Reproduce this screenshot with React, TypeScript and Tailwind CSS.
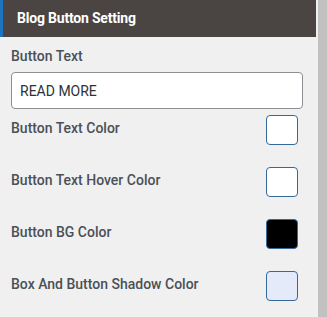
import { useState } from 'react';

const colorRows = [
  { label: 'Button Text Color', color: '#ffffff' },
  { label: 'Button Text Hover Color', color: '#ffffff' },
  { label: 'Button BG Color', color: '#000000' },
  { label: 'Box And Button Shadow Color', color: '#e5eafa' },
];

export default function App() {
  const [text, setText] = useState('READ MORE');

  return (
    <div className="flex h-[317px] w-[327px] overflow-hidden bg-[#f0f0f0] font-['Roboto',sans-serif]">
      <div className="flex w-[316px] flex-col">
        <div className="flex h-[37px] items-center border-l-[3px] border-[#1e73be] bg-[#4a4543] pl-[14px]">
          <span className="text-[14px] font-bold tracking-[-0.2px] text-white">Blog Button Setting</span>
        </div>

        <div className="flex flex-col px-[11px]">
          <label className="mt-[10px] text-[14px] font-medium leading-[18px] text-[#4a5057]">Button Text</label>
          <input
            type="text"
            value={text}
            onChange={(e) => setText(e.target.value)}
            className="mt-[7px] h-[37px] w-[292px] rounded-[4px] border border-[#8c8f94] bg-white px-[8px] text-[14px] text-[#2c3338] outline-none"
          />

          <div className="mt-[6px] flex flex-col gap-[23px]">
            {colorRows.map((row) => (
              <div key={row.label} className="flex h-[29px] items-start justify-between pr-[7px]">
                <span className="mt-[4px] text-[14px] font-medium leading-[18px] text-[#4a5057]">{row.label}</span>
                <div
                  className="h-[30px] w-[32px] rounded-[4px] border border-[#36699a]"
                  style={{ backgroundColor: row.color }}
                />
              </div>
            ))}
          </div>
        </div>
      </div>
      <div className="w-[2px]" />
      <div className="w-[9px] bg-[#c1c1c1]" />
    </div>
  );
}
